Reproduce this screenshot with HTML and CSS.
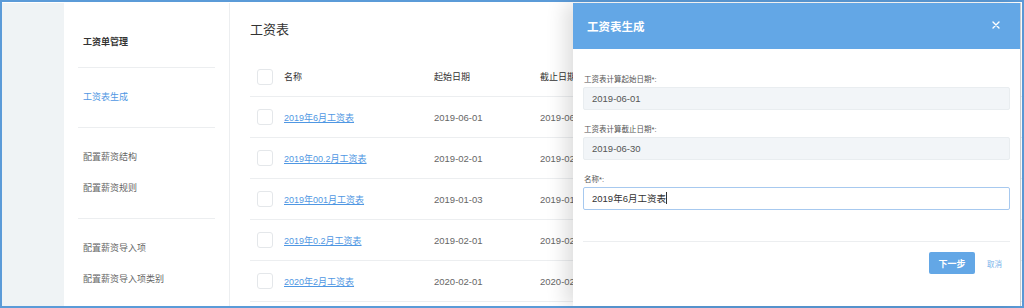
FILE: index.html
```html
<!DOCTYPE html>
<html lang="zh-CN">
<head>
<meta charset="utf-8">
<title>工资表</title>
<link rel="stylesheet" href="styles.css">
</head>
<body>
<div class="frame">
  <div class="layout">
    <div class="gutter"></div>
    <nav class="sidebar">
      <div class="group group-first">
        <div class="nav-item nav-head">工资单管理</div>
      </div>
      <div class="group">
        <div class="nav-item nav-active">工资表生成</div>
      </div>
      <div class="group">
        <div class="nav-item">配置薪资结构</div>
        <div class="nav-item">配置薪资规则</div>
      </div>
      <div class="group group-last">
        <div class="nav-item">配置薪资导入项</div>
        <div class="nav-item">配置薪资导入项类别</div>
      </div>
    </nav>
    <main class="main">
      <h1 class="title">工资表</h1>
      <div class="table">
        <div class="row row-head">
          <div class="c-check"><span class="checkbox"></span></div>
          <div class="c-name">名称</div>
          <div class="c-start">起始日期</div>
          <div class="c-end">截止日期</div>
        </div>
        <div class="row">
          <div class="c-check"><span class="checkbox"></span></div>
          <div class="c-name"><a class="link">2019年6月工资表</a></div>
          <div class="c-start date">2019-06-01</div>
          <div class="c-end date">2019-06-30</div>
        </div>
        <div class="row">
          <div class="c-check"><span class="checkbox"></span></div>
          <div class="c-name"><a class="link">2019年00.2月工资表</a></div>
          <div class="c-start date">2019-02-01</div>
          <div class="c-end date">2019-02-28</div>
        </div>
        <div class="row">
          <div class="c-check"><span class="checkbox"></span></div>
          <div class="c-name"><a class="link">2019年001月工资表</a></div>
          <div class="c-start date">2019-01-03</div>
          <div class="c-end date">2019-01-31</div>
        </div>
        <div class="row">
          <div class="c-check"><span class="checkbox"></span></div>
          <div class="c-name"><a class="link">2019年0.2月工资表</a></div>
          <div class="c-start date">2019-02-01</div>
          <div class="c-end date">2019-02-28</div>
        </div>
        <div class="row">
          <div class="c-check"><span class="checkbox"></span></div>
          <div class="c-name"><a class="link">2020年2月工资表</a></div>
          <div class="c-start date">2020-02-01</div>
          <div class="c-end date">2020-02-29</div>
        </div>
      </div>
    </main>
  </div>

  <section class="modal">
    <header class="modal-head">
      <span class="modal-title">工资表生成</span>
      <svg class="close" width="8" height="8" viewBox="0 0 8 8"><path d="M1 1L7 7M7 1L1 7" stroke="#fff" stroke-width="1.4" stroke-linecap="round"/></svg>
    </header>
    <div class="modal-body">
      <div class="field">
        <label class="label">工资表计算起始日期*:</label>
        <div class="input input-readonly">2019-06-01</div>
      </div>
      <div class="field">
        <label class="label">工资表计算截止日期*:</label>
        <div class="input input-readonly">2019-06-30</div>
      </div>
      <div class="field">
        <label class="label">名称*:</label>
        <div class="input input-focus">2019年6月工资表<span class="caret"></span></div>
      </div>
    </div>
    <footer class="modal-foot">
      <button class="btn-primary">下一步</button>
      <span class="btn-cancel">取消</span>
    </footer>
  </section>
</div>
</body>
</html>
```

FILE: styles.css
```css
* { box-sizing: border-box; }
html, body { margin: 0; padding: 0; }
body {
  width: 1024px;
  height: 308px;
  overflow: hidden;
  font-family: "Liberation Sans", "Noto Sans CJK SC", sans-serif;
  background: #fff;
}
.frame {
  position: relative;
  width: 1024px;
  height: 308px;
  border: 2px solid #5b9bd8;
  padding-top: 1px;
  background: #fff;
}
.layout {
  display: flex;
  height: 100%;
}
.gutter {
  width: 62px;
  flex: none;
  background: #eff3f5;
}
.sidebar {
  width: 166px;
  flex: none;
  background: #fff;
  border-right: 1px solid #eceef0;
  padding: 0 14px;
}
.group {
  padding: 14px 0 14px;
  border-bottom: 1px solid #eceef0;
}
.group-first { padding: 24px 0 9px; }
.group-last { border-bottom: none; }
.nav-item {
  height: 31px;
  line-height: 31px;
  padding-left: 5px;
  font-size: 9px;
  color: #666;
  white-space: nowrap;
}
.nav-head { color: #333; font-weight: bold; }
.nav-active { color: #4f97e3; }

.main {
  flex: 1;
  padding-left: 20px;
  overflow: hidden;
}
.title {
  margin: 17px 0 17px;
  font-size: 13px;
  line-height: 20px;
  font-weight: normal;
  color: #333;
}
.row {
  display: flex;
  align-items: center;
  height: 41px;
  border-bottom: 1px solid #eceef0;
  font-size: 9.5px;
  white-space: nowrap;
}
.row-head { height: 40px; font-size: 9px; color: #333; }
.c-check { width: 34px; flex: none; padding-left: 7px; display: flex; }
.c-name { width: 150px; flex: none; }
.c-start { width: 106px; flex: none; }
.c-end { flex: none; }
.checkbox {
  width: 16px;
  height: 16px;
  border: 1px solid #e4e7ea;
  border-radius: 3px;
  background: #fff;
}
.link {
  color: #4f97e3;
  text-decoration: underline;
  font-size: 9px;
}
.date { color: #666; }

.modal {
  position: absolute;
  top: 1px;
  bottom: 0;
  right: 1px;
  width: 448px;
  background: #fff;
  box-shadow: -8px 0 18px rgba(0, 0, 0, 0.13);
  border-right: 1px solid #c9cdd1;
  display: flex;
  flex-direction: column;
}
.modal-head {
  height: 46px;
  flex: none;
  background: #63a7e6;
  display: flex;
  align-items: center;
  justify-content: space-between;
  padding: 0 20px 0 14px;
}
.modal-title {
  color: #fff;
  font-size: 11.5px;
  font-weight: bold;
}
.close { margin-top: -2px; }
.modal-body {
  padding: 25px 10px 0;
  display: flex;
  flex-direction: column;
  gap: 14px;
}
.label {
  display: block;
  font-size: 7.5px;
  line-height: 12px;
  color: #555;
  margin: 0 0 1px 1px;
}
.input {
  height: 23px;
  line-height: 21px;
  border: 1px solid #e9edf0;
  border-radius: 2px;
  padding-left: 8px;
  font-size: 9.5px;
  color: #555;
}
.input-readonly { background: #f2f5f8; }
.input-focus { background: #fff; border-color: #a7c9ef; color: #333; }
.caret {
  display: inline-block;
  width: 1px;
  height: 12px;
  background: #333;
  vertical-align: -2px;
}
.modal-foot {
  margin: 31px 10px 0;
  border-top: 1px solid #eceef0;
  padding-top: 10px;
  display: flex;
  align-items: center;
  justify-content: flex-end;
}
.btn-primary {
  width: 46px;
  height: 22px;
  border: none;
  border-radius: 2px;
  background: #63a7e6;
  color: #fff;
  font-family: inherit;
  font-size: 9px;
  font-weight: bold;
  padding: 0;
}
.btn-cancel {
  margin: 0 8px 0 12px;
  font-size: 7.5px;
  color: #7ab3ea;
}
```
